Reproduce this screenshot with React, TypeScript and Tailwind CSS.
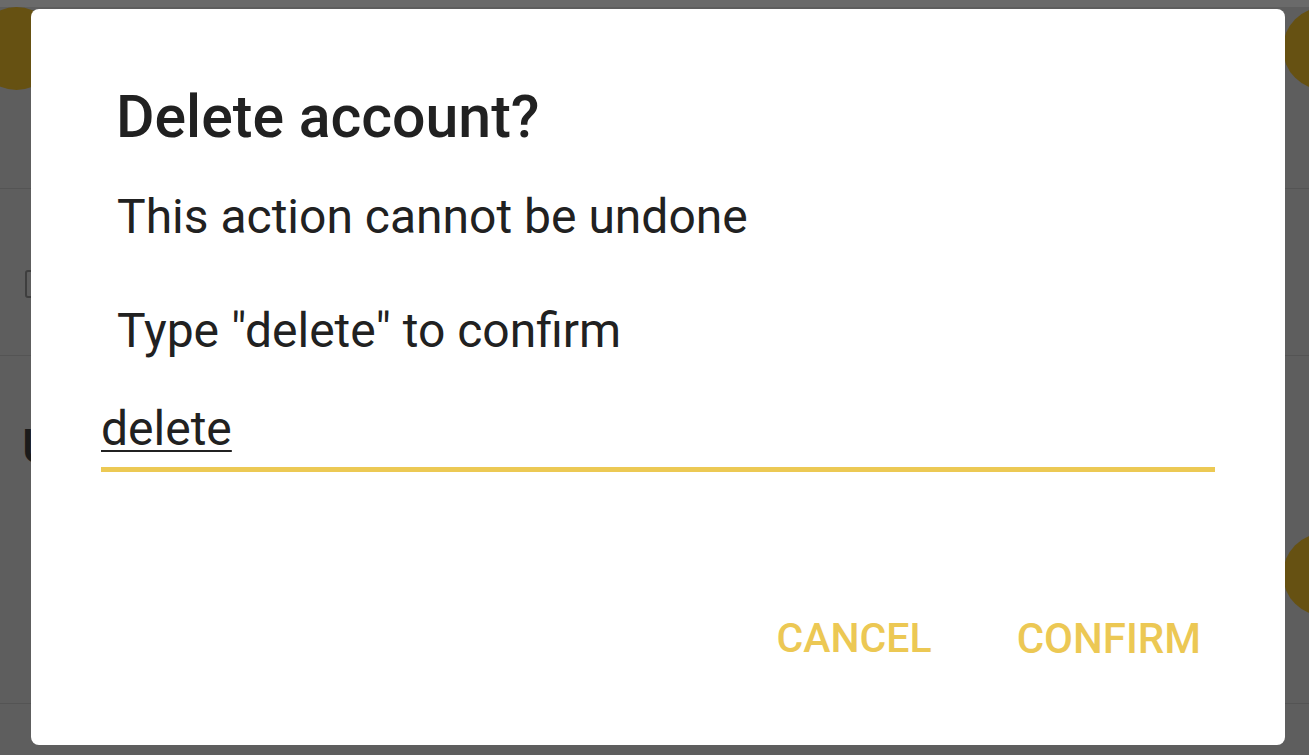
import React, { useState } from 'react';

const BackdropPage: React.FC = () => (
  <div className="flex h-full w-full flex-col overflow-hidden">
    <div className="h-[7px] shrink-0 bg-[#6a6a6a]" />
    {/* header row with round buttons */}
    <div className="flex h-[181px] shrink-0 items-start justify-between">
      <div className="-ml-[25px] h-[83px] w-[83px] rounded-full bg-[#665112]" />
      <div className="-mr-[57px] h-[83px] w-[83px] rounded-full bg-[#665112]" />
    </div>
    <div className="h-px shrink-0 bg-[#545454]" />
    <div className="flex h-[166px] shrink-0 items-start pl-[25px] pt-[81px]">
      <div className="h-[28px] w-[28px] rounded-[3px] border-2 border-[#3e3e3e]" />
    </div>
    <div className="h-px shrink-0 bg-[#545454]" />
    <div className="flex h-[347px] shrink-0 flex-col">
      <div className="ml-[22px] mt-[62px] text-[48px] leading-[57px] font-medium text-[#1b1b1b]">U</div>
      <div className="-mr-[57px] mt-[58px] h-[83px] w-[83px] self-end rounded-full bg-[#665112]" />
    </div>
    <div className="h-px shrink-0 bg-[#545454]" />
  </div>
);

export default function App() {
  const [value, setValue] = useState('delete');

  return (
    <div className="relative h-[755px] w-[1309px] overflow-hidden bg-[#5e5e5e] font-[Roboto,sans-serif]">
      <BackdropPage />

      {/* Dialog */}
      <div className="absolute left-[31px] top-[9px] flex h-[736px] w-[1254px] flex-col rounded-[8px] bg-white">
        <h2 className="ml-[85px] mt-[73px] text-[59px] leading-[69px] font-medium text-[#212121]">
          Delete account?
        </h2>
        <p className="ml-[86px] mt-[37px] text-[48px] leading-[57px] text-[#212121]">
          This action cannot be undone
        </p>
        <p className="ml-[86px] mt-[57px] text-[48px] leading-[57px] text-[#212121]">
          Type "delete" to confirm
        </p>
        <div className="mx-[70px] mt-[41px] border-b-[5px] border-[#ecc954] pb-[10px]">
          <input
            value={value}
            onChange={(e) => setValue(e.target.value)}
            className="w-full bg-transparent p-0 text-[48px] leading-[57px] text-[#212121] underline decoration-2 underline-offset-[5px] outline-none"
          />
        </div>

        <div className="mt-auto mb-[82px] flex justify-end gap-[85px] pr-[84px]">
          <button className="text-[41px] leading-[49px] font-medium uppercase text-[#ecc854]">Cancel</button>
          <button className="text-[42px] leading-[49px] font-medium uppercase text-[#ecc854]">Confirm</button>
        </div>
      </div>
    </div>
  );
}
